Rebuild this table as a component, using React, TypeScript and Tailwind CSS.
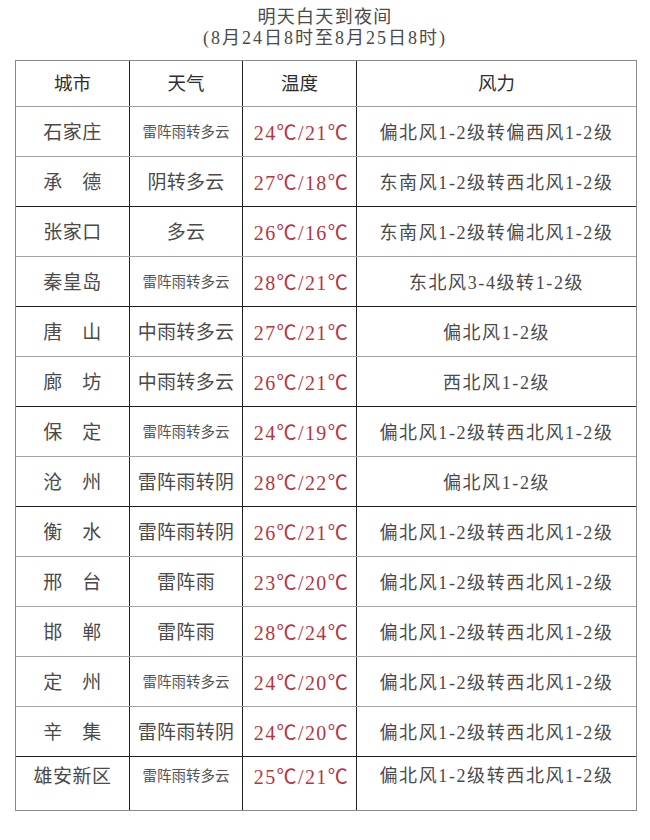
import React from "react";

type Row = { city: string; weather: string; small?: boolean; temp: string; wind: string; dark?: boolean };

const rows: Row[] = [
  { city: "石家庄", weather: "雷阵雨转多云", small: true, temp: "24℃/21℃", wind: "偏北风1-2级转偏西风1-2级" },
  { city: "承　德", weather: "阴转多云", temp: "27℃/18℃", wind: "东南风1-2级转西北风1-2级", dark: true },
  { city: "张家口", weather: "多云", temp: "26℃/16℃", wind: "东南风1-2级转偏北风1-2级" },
  { city: "秦皇岛", weather: "雷阵雨转多云", small: true, temp: "28℃/21℃", wind: "东北风3-4级转1-2级", dark: true },
  { city: "唐　山", weather: "中雨转多云", temp: "27℃/21℃", wind: "偏北风1-2级" },
  { city: "廊　坊", weather: "中雨转多云", temp: "26℃/21℃", wind: "西北风1-2级", dark: true },
  { city: "保　定", weather: "雷阵雨转多云", small: true, temp: "24℃/19℃", wind: "偏北风1-2级转西北风1-2级" },
  { city: "沧　州", weather: "雷阵雨转阴", temp: "28℃/22℃", wind: "偏北风1-2级", dark: true },
  { city: "衡　水", weather: "雷阵雨转阴", temp: "26℃/21℃", wind: "偏北风1-2级转西北风1-2级" },
  { city: "邢　台", weather: "雷阵雨", temp: "23℃/20℃", wind: "偏北风1-2级转西北风1-2级" },
  { city: "邯　郸", weather: "雷阵雨", temp: "28℃/24℃", wind: "偏北风1-2级转西北风1-2级" },
  { city: "定　州", weather: "雷阵雨转多云", small: true, temp: "24℃/20℃", wind: "偏北风1-2级转西北风1-2级" },
  { city: "辛　集", weather: "雷阵雨转阴", temp: "24℃/20℃", wind: "偏北风1-2级转西北风1-2级", dark: true },
  { city: "雄安新区", weather: "雷阵雨转多云", small: true, temp: "25℃/21℃", wind: "偏北风1-2级转西北风1-2级" },
];

const font = { fontFamily: '"Liberation Serif", "Noto Sans CJK SC", serif' };

export default function App() {
  return (
    <div className="w-[650px] h-[840px] bg-white text-[#4a4a4a]" style={font}>
      <div className="pt-[7px] text-center text-[18px] leading-[21px] text-[#4a4a4a]">
        <div className="tracking-[1.3px]">明天白天到夜间</div>
        <div className="tracking-[2px]">(8月24日8时至8月25日8时)</div>
      </div>
      <div className="ml-[15px] mt-[11px] w-[622px] border border-[#8a8a8a]">
        <div className="flex h-[46px] border-b border-[#a0a0a0] text-[18.5px] text-[#2e2e2e]">
          <div className="w-[114px] flex items-center justify-center pt-[3px] border-r border-[#222]">城市</div>
          <div className="w-[113px] flex items-center justify-center pt-[3px] border-r border-[#222]">天气</div>
          <div className="w-[114px] flex items-center justify-center pt-[3px] border-r border-[#222]">温度</div>
          <div className="flex-1 flex items-center justify-center pt-[3px]">风力</div>
        </div>
        {rows.map((r, i) => {
          const last = i === rows.length - 1;
          const align = last ? "items-start pt-[6px]" : "items-center pt-[3px]";
          return (
            <div
              key={i}
              className={
                "flex " +
                (last ? "h-[53px]" : r.dark ? "h-[50px] border-b border-[#1e1e1e]" : "h-[50px] border-b border-[#a5a5a5]")
              }
            >
              <div className={"w-[114px] flex justify-center border-r border-[#222] text-[19px] tracking-[0.5px] " + align}>
                {r.city}
              </div>
              <div
                className={
                  "w-[113px] flex justify-center border-r border-[#222] " +
                  (r.small ? "text-[14.5px] text-[#555] " : "text-[19px] tracking-[0.3px] ") +
                  (last ? "items-start pt-[9px]" : "items-center pt-[3px]")
                }
              >
                {r.weather}
              </div>
              <div className={"w-[114px] flex justify-center border-r border-[#222] pl-[4px] text-[20px] tracking-[1.4px] text-[#b5363f] " + (last ? "items-start pt-[5px]" : "items-center pt-[2px]")}>
                {r.temp}
              </div>
              <div className={"flex-1 flex justify-center text-[18px] tracking-[1.6px] " + align}>
                {r.wind}
              </div>
            </div>
          );
        })}
      </div>
    </div>
  );
}
